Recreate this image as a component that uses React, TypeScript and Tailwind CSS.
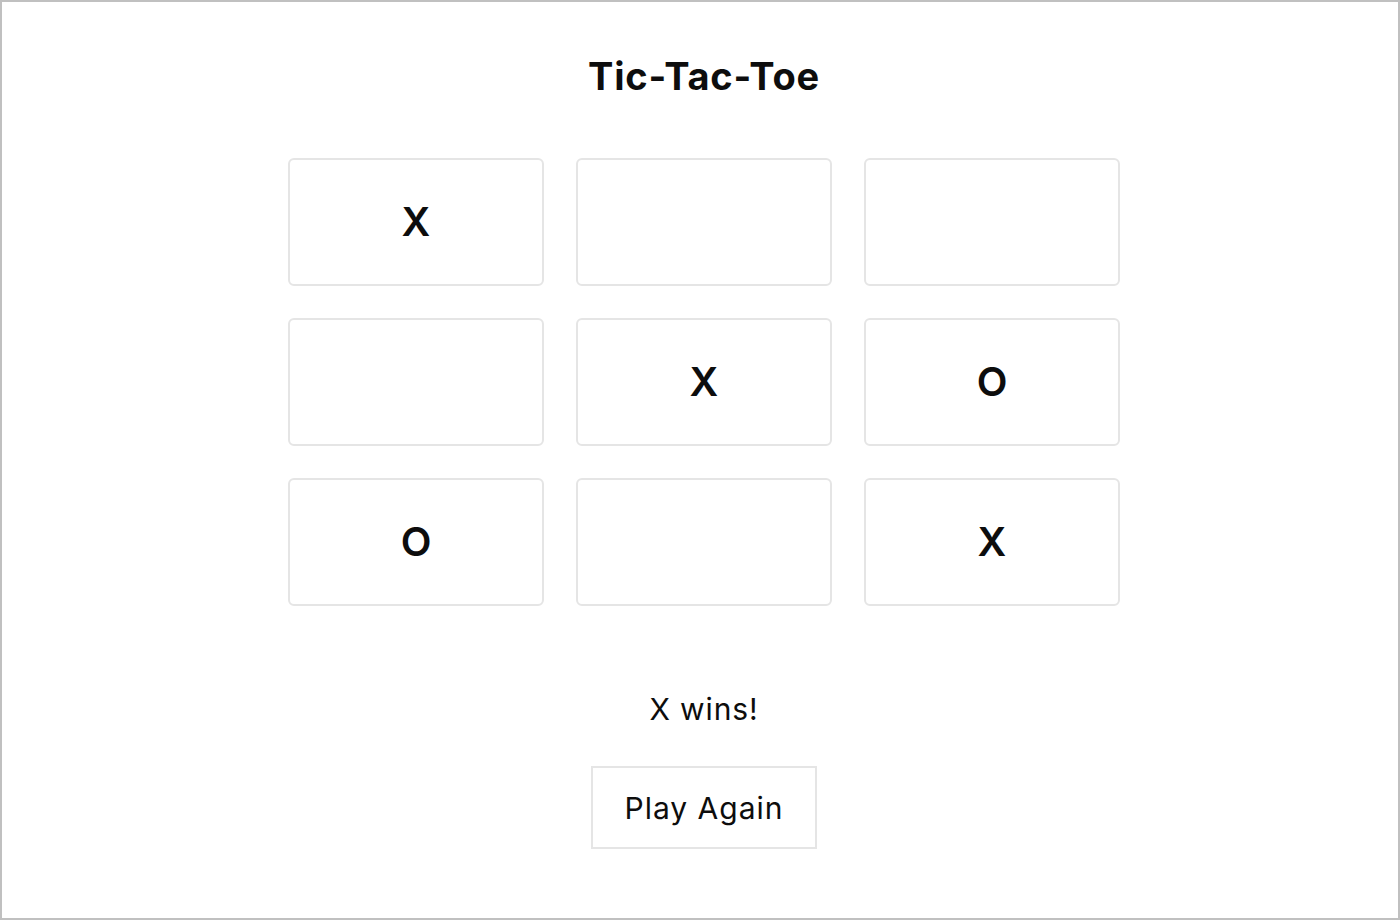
import React from "react";

const board = ["X", "", "", "", "X", "O", "O", "", "X"];

export default function App() {
  return (
    <div
      className="w-[1400px] h-[920px] border-2 border-[#c0c0c0] bg-white text-[#0d0d0d] flex flex-col items-center pl-[8px]"
      style={{ fontFamily: "Inter, 'Noto Sans', sans-serif" }}
    >
      <h1 className="mt-[54px] text-[38px] leading-[40px] font-bold tracking-[0.8px]">Tic-Tac-Toe</h1>
      <div className="mt-[62px] grid grid-cols-[256px_256px_256px] gap-[32px]">
        {board.map((c, i) => (
          <button
            key={i}
            className="h-[128px] w-[256px] border-2 border-[#e5e5e5] rounded-[6px] bg-white flex items-center justify-center text-[40px] font-semibold"
          >
            {c}
          </button>
        ))}
      </div>
      <div className="mt-[85px] text-[30px] leading-[36px] tracking-[0.9px]">X wins!</div>
      <button className="mt-[39px] h-[83px] w-[226px] border-2 border-[#e5e5e5] bg-white text-[30px] leading-[36px] tracking-[1px] flex items-center justify-center">
        Play Again
      </button>
    </div>
  );
}
